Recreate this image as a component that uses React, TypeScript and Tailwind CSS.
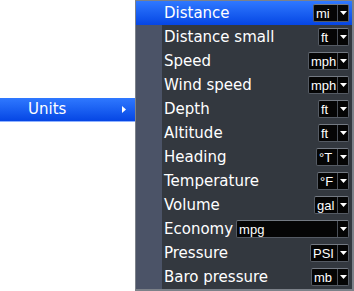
import React from 'react';

type Row = { label: string; value: string; w: number; wide?: boolean };

const rows: Row[] = [
  { label: 'Distance', value: 'mi', w: 36 },
  { label: 'Distance small', value: 'ft', w: 31 },
  { label: 'Speed', value: 'mph', w: 41 },
  { label: 'Wind speed', value: 'mph', w: 41 },
  { label: 'Depth', value: 'ft', w: 31 },
  { label: 'Altitude', value: 'ft', w: 31 },
  { label: 'Heading', value: '°T', w: 33 },
  { label: 'Temperature', value: '°F', w: 32 },
  { label: 'Volume', value: 'gal', w: 35 },
  { label: 'Economy', value: 'mpg', w: 113, wide: true },
  { label: 'Pressure', value: 'PSI', w: 39 },
  { label: 'Baro pressure', value: 'mb', w: 38 },
];

function Caret() {
  return (
    <svg width="7" height="4" viewBox="0 0 7 4" className="fill-white">
      <path d="M0 0h7L3.5 4z" />
    </svg>
  );
}

function Select({ value, w }: { value: string; w: number }) {
  return (
    <div
      className="flex h-[18px] items-stretch rounded-[2px] border border-[#555b64] border-t-[#747a83] bg-[#050505]"
      style={{ width: w }}
    >
      <span className="flex-1 overflow-hidden pl-[2px] font-['Liberation_Sans',sans-serif] text-[13px] leading-[17px] text-white">
        {value}
      </span>
      <span className="flex w-[11px] shrink-0 items-center justify-center border-l border-[#4a4f57]">
        <Caret />
      </span>
    </div>
  );
}

export default function App() {
  return (
    <div className="flex h-[291px] w-[354px] overflow-hidden bg-white font-['DejaVu_Sans',sans-serif]">
      <div className="w-[135px] shrink-0 pt-[98px]">
        <div className="flex h-[24px] items-center justify-between bg-gradient-to-b from-[#2f78ff] to-[#0645e4] border-b border-[#8fb2ff] pl-[28px] pr-[9px]">
          <span className="text-[15px] text-white">Units</span>
          <svg width="4" height="7" viewBox="0 0 4 7" className="fill-white">
            <path d="M0 0l4 3.5-4 3.5z" />
          </svg>
        </div>
      </div>
      <div className="flex h-[291px] w-[219px] flex-col border-l border-r-2 border-b-2 border-t border-[#7c8189] bg-[#33383f]">
        {rows.map((r, i) => (
          <div
            key={r.label}
            className={
              i === 0
                ? 'flex h-[24px] items-center bg-gradient-to-b from-[#2f78ff] to-[#0645e4]'
                : 'flex h-[24px] items-center'
            }
          >
            <div
              className={
                i === 0 ? 'h-full w-[26px] shrink-0' : 'h-full w-[26px] shrink-0 bg-[#4b5367]'
              }
            />
            <div className="flex flex-1 items-center pl-[2px] pr-[3px]">
              <span className="text-[15px] leading-[24px] text-white whitespace-nowrap">{r.label}</span>
              <div className={r.wide ? 'ml-[3px] flex flex-1 justify-end' : 'ml-auto'}>
                <Select value={r.value} w={r.w} />
              </div>
            </div>
          </div>
        ))}
      </div>
    </div>
  );
}
